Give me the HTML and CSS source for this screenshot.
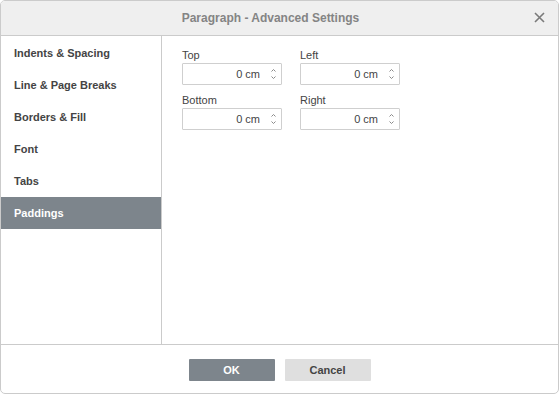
FILE: index.html
```html
<!DOCTYPE html>
<html>
<head>
<meta charset="utf-8">
<link rel="stylesheet" href="styles.css">
</head>
<body>
<div class="dialog">
  <div class="header">
    <span class="title">Paragraph - Advanced Settings</span>
    <span class="close">
      <svg width="11" height="11" viewBox="0 0 11 11"><path d="M1 1L10 10M10 1L1 10" stroke="#7a7a7a" stroke-width="1.6" fill="none"/></svg>
    </span>
  </div>
  <div class="body">
    <div class="sidebar">
      <div class="item">Indents &amp; Spacing</div>
      <div class="item">Line &amp; Page Breaks</div>
      <div class="item">Borders &amp; Fill</div>
      <div class="item">Font</div>
      <div class="item">Tabs</div>
      <div class="item active">Paddings</div>
    </div>
    <div class="panel">
      <div class="grid">
        <div class="field">
          <div class="label">Top</div>
          <div class="input"><span class="val">0 cm</span><span class="spin"><svg width="7" height="14" viewBox="0 0 7 14"><path d="M1.5 4.5L3.5 2.5L5.5 4.5M1.5 9.5L3.5 11.5L5.5 9.5" stroke="#8a8a8a" stroke-width="1" fill="none"/></svg></span></div>
        </div>
        <div class="field">
          <div class="label">Left</div>
          <div class="input"><span class="val">0 cm</span><span class="spin"><svg width="7" height="14" viewBox="0 0 7 14"><path d="M1.5 4.5L3.5 2.5L5.5 4.5M1.5 9.5L3.5 11.5L5.5 9.5" stroke="#8a8a8a" stroke-width="1" fill="none"/></svg></span></div>
        </div>
        <div class="field">
          <div class="label">Bottom</div>
          <div class="input"><span class="val">0 cm</span><span class="spin"><svg width="7" height="14" viewBox="0 0 7 14"><path d="M1.5 4.5L3.5 2.5L5.5 4.5M1.5 9.5L3.5 11.5L5.5 9.5" stroke="#8a8a8a" stroke-width="1" fill="none"/></svg></span></div>
        </div>
        <div class="field">
          <div class="label">Right</div>
          <div class="input"><span class="val">0 cm</span><span class="spin"><svg width="7" height="14" viewBox="0 0 7 14"><path d="M1.5 4.5L3.5 2.5L5.5 4.5M1.5 9.5L3.5 11.5L5.5 9.5" stroke="#8a8a8a" stroke-width="1" fill="none"/></svg></span></div>
        </div>
      </div>
    </div>
  </div>
  <div class="footer">
    <button class="btn primary">OK</button>
    <button class="btn secondary">Cancel</button>
  </div>
</div>
</body>
</html>
```
FILE: styles.css
```css
html, body {
  margin: 0;
  padding: 0;
  background: #ffffff;
}
body {
  font-family: "Liberation Sans", Arial, sans-serif;
  font-size: 11px;
  color: #444444;
}
.dialog {
  box-sizing: border-box;
  width: 559px;
  height: 394px;
  border: 1px solid #cbcbcb;
  border-radius: 5px;
  display: flex;
  flex-direction: column;
  overflow: hidden;
  background: #ffffff;
}
.header {
  height: 34px;
  flex: none;
  background: #efefef;
  border-bottom: 1px solid #cbcbcb;
  display: flex;
  align-items: center;
  justify-content: center;
  padding-right: 18px;
  position: relative;
}
.title {
  font-size: 12px;
  font-weight: bold;
  color: #848484;
}
.close {
  position: absolute;
  right: 13px;
  top: 11px;
  width: 11px;
  height: 11px;
  display: flex;
}
.body {
  flex: 1;
  display: flex;
  min-height: 0;
}
.sidebar {
  width: 160px;
  flex: none;
  border-right: 1px solid #cbcbcb;
  padding-top: 1px;
}
.item {
  height: 32px;
  line-height: 32px;
  padding-left: 13px;
  font-weight: bold;
  color: #444444;
}
.item.active {
  background: #7d858c;
  color: #ffffff;
}
.panel {
  flex: 1;
  padding: 12px 0 0 20px;
}
.grid {
  display: grid;
  grid-template-columns: 100px 100px;
  column-gap: 18px;
  row-gap: 8px;
}
.label {
  height: 14px;
  line-height: 14px;
  margin-bottom: 1px;
  color: #444444;
}
.input {
  box-sizing: border-box;
  height: 22px;
  border: 1px solid #cfcfcf;
  border-radius: 1px;
  display: flex;
  align-items: center;
  justify-content: flex-end;
  position: relative;
}
.val {
  padding-right: 21px;
  color: #444444;
}
.spin {
  position: absolute;
  right: 4px;
  top: 3px;
  display: flex;
}
.footer {
  height: 49px;
  flex: none;
  border-top: 1px solid #cbcbcb;
  display: flex;
  justify-content: center;
  align-items: flex-start;
  gap: 10px;
  padding-top: 14px;
  box-sizing: border-box;
}
.btn {
  width: 86px;
  height: 22px;
  border: none;
  border-radius: 1px;
  font-family: "Liberation Sans", Arial, sans-serif;
  font-size: 11px;
  font-weight: bold;
  padding: 0;
}
.primary {
  background: #7d858c;
  color: #ffffff;
}
.secondary {
  background: #dfdfdf;
  color: #444444;
}
```
